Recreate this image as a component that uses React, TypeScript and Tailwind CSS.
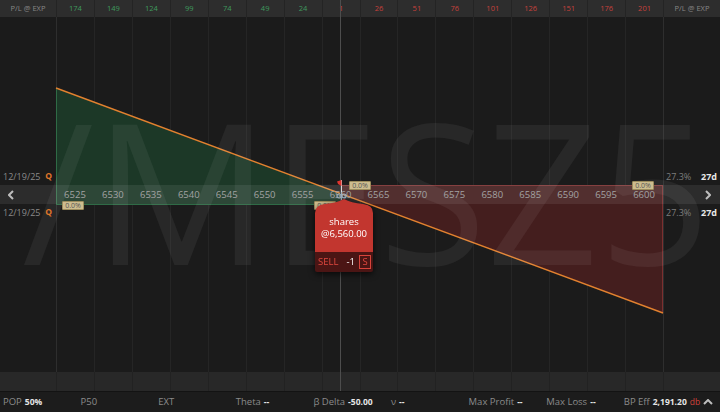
import React from 'react';

const COL = 607 / 16;
const cols = Array.from({ length: 16 }, (_, i) => i);
const plAtExp = [174, 149, 124, 99, 74, 49, 24, 1, 26, 51, 76, 101, 126, 151, 176, 201];
const prices = cols.map((i) => 6525 + i * 5);

// P/L line in chart coordinates (chart area starts at y=17)
const LX0 = 56;
const LY0 = 71;
const LX1 = 663;
const LY1 = 296;
const ZX = 340;
const ZY = LY0 + ((ZX - LX0) * (LY1 - LY0)) / (LX1 - LX0);

function ChartCanvas() {
  return (
    <svg className="absolute inset-0" width={720} height={355} viewBox="0 0 720 355">
      {Array.from({ length: 17 }, (_, i) => {
        const x = Math.round(56 + COL * i) + 0.5;
        const edge = i === 0 || i === 16;
        return <line key={i} x1={x} x2={x} y1={0} y2={355} stroke={edge ? '#2e2e2e' : '#252525'} strokeWidth={1} />;
      })}
      {/* profit zone */}
      <polygon points={`${LX0},${LY0} ${ZX},${ZY} ${ZX},187 ${LX0},187`} fill="#1c3827" />
      <line x1={LX0} x2={ZX} y1={187.5} y2={187.5} stroke="#2f6b46" strokeWidth={1} />
      <line x1={LX0 + 0.5} x2={LX0 + 0.5} y1={LY0} y2={187} stroke="#2f6b46" strokeWidth={1} />
      {/* loss zone */}
      <polygon points={`${ZX},168 ${LX1},168 ${LX1},${LY1} ${ZX},${ZY}`} fill="#441e1e" />
      <line x1={ZX} x2={LX1} y1={168.5} y2={168.5} stroke="#7c3030" strokeWidth={1} />
      <line x1={LX1 - 0.5} x2={LX1 - 0.5} y1={168} y2={LY1} stroke="#7c3030" strokeWidth={1} />
      {/* P/L line */}
      <line x1={LX0} y1={LY0} x2={LX1} y2={LY1} stroke="#e2812f" strokeWidth={1.4} />
    </svg>
  );
}

function Badge({ className }: { className: string }) {
  return (
    <div
      className={`absolute flex h-[9px] w-[22px] items-center justify-center rounded-[1px] border border-[#9c8c5c] bg-[#cdbd8f] text-[7px] leading-none text-[#555] ${className}`}
    >
      0.0%
    </div>
  );
}

function OrderBubble() {
  return (
    <div className="absolute left-[315px] top-[199px] flex w-[58px] flex-col drop-shadow-[0_2px_3px_rgba(0,0,0,0.7)]">
      <svg width={58} height={14} viewBox="0 0 58 14" className="block">
        <path d="M0,14 Q0,6 10,5 Q22,4 29,0 Q36,4 48,5 Q58,6 58,14 Z" fill="#c2362f" />
      </svg>
      <div className="flex h-[39px] flex-col items-center bg-[#c2362f] pt-[3px] text-[9.5px] leading-[12px] text-white">
        <span>shares</span>
        <span>@6,560.00</span>
      </div>
      <div className="flex h-[20px] items-center rounded-b-[2px] bg-[#4b1514] pl-[3px] pr-[2px] text-[9.5px]">
        <span className="text-[#e0483f]">SELL</span>
        <span className="ml-auto mr-[4px] text-white">-1</span>
        <span className="flex h-[14px] w-[12px] items-center justify-center border border-[#d8433b] text-[#e0483f]">S</span>
      </div>
    </div>
  );
}

function Chevron({ dir }: { dir: 'left' | 'right' | 'up' }) {
  const pts = dir === 'left' ? '5,1 1,5 5,9' : dir === 'right' ? '1,1 5,5 1,9' : '1,5 5,1 9,5';
  const w = dir === 'up' ? 10 : 6;
  const h = dir === 'up' ? 6 : 10;
  return (
    <svg width={w} height={h} viewBox={`0 0 ${w} ${h}`}>
      <polyline points={pts} fill="none" stroke="#bdbdbd" strokeWidth={2} />
    </svg>
  );
}

function DateRow() {
  return (
    <div className="flex h-[17px] items-center text-[9px]">
      <div className="flex w-[56px] items-center pl-[3px] text-[#8a8a8a]">
        <span>12/19/25</span>
        <span className="ml-auto mr-[4px] text-[8.5px] font-bold text-[#e0772a]">Q</span>
      </div>
      <div className="w-[607px]" />
      <div className="flex w-[57px] items-center justify-between pl-[3px] pr-[3px]">
        <span className="text-[#7d7d7d]">27.3%</span>
        <span className="font-bold text-[#e8e8e8]">27d</span>
      </div>
    </div>
  );
}

function Stat({ label, value, extra }: { label: string; value: string; extra?: string }) {
  return (
    <div className="flex w-[77.6px] shrink-0 items-center gap-[3px] whitespace-nowrap">
      <span className="text-[9.5px] text-[#8b8b8b]">{label}</span>
      {value && <span className="text-[8.5px] font-bold text-[#e6e6e6]">{value}</span>}
      {extra && <span className="text-[8.5px] text-[#d2423b]">{extra}</span>}
    </div>
  );
}

export default function App() {
  return (
    <div className="relative flex h-[412px] w-[720px] flex-col overflow-hidden bg-[#1b1b1b] font-['Open_Sans',sans-serif]">
      {/* header */}
      <div className="flex h-[17px] bg-[#2d2d2d] text-[7.5px] leading-none">
        <div className="flex w-[56px] items-center justify-center text-[#878787]">P/L @ EXP</div>
        <div className="flex w-[607px]">
          {cols.map((i) => (
            <div
              key={i}
              className={`flex flex-1 items-center justify-center border-l border-[#242424] ${i < 7 ? 'text-[#3f9a5d]' : 'text-[#c8413c]'}`}
            >
              {plAtExp[i]}
            </div>
          ))}
        </div>
        <div className="flex w-[57px] items-center justify-center border-l border-[#242424] text-[#878787]">P/L @ EXP</div>
      </div>

      {/* chart */}
      <div className="relative h-[355px]">
        <ChartCanvas />
        <div className="pointer-events-none absolute left-[22px] top-[74px] whitespace-nowrap text-[196px] leading-none text-[#ffffff0f]">
          /MESZ5
        </div>
        <div className="relative flex flex-col pt-[151px]">
          <DateRow />
          <div className="flex h-[19px] items-center bg-[#ffffff14] text-[9.5px] leading-none text-[#a3a3a3]">
            <div className="flex w-[56px] items-center pl-[8px]">
              <Chevron dir="left" />
            </div>
            <div className="flex w-[607px]">
              {prices.map((p) => (
                <div key={p} className="flex flex-1 justify-center">
                  {p}
                </div>
              ))}
            </div>
            <div className="flex w-[57px] items-center justify-end pr-[9px]">
              <Chevron dir="right" />
            </div>
          </div>
          <DateRow />
        </div>
      </div>

      {/* lower band */}
      <div className="flex h-[19px] bg-[#282828]">
        <div className="w-[56px]" />
        <div className="flex w-[607px]">
          {cols.map((i) => (
            <div key={i} className="flex-1 border-l border-[#222]" />
          ))}
        </div>
        <div className="w-[57px] border-l border-[#222]" />
      </div>

      {/* status bar */}
      <div className="flex h-[21px] items-center border-t border-[#131313] bg-[#1c1c1c] pl-[3px]">
        <Stat label="POP" value="50%" />
        <Stat label="P50" value="" />
        <Stat label="EXT" value="" />
        <Stat label="Theta" value="--" />
        <Stat label="β Delta" value="-50.00" />
        <Stat label="ν" value="--" />
        <Stat label="Max Profit" value="--" />
        <Stat label="Max Loss" value="--" />
        <Stat label="BP Eff" value="2,191.20" extra="db" />
        <div className="ml-auto mr-[7px] flex items-center">
          <Chevron dir="up" />
        </div>
      </div>

      {/* center marker line */}
      <div className="pointer-events-none absolute left-[340px] top-0 h-[391px] w-px bg-[#4d4d4d]" />

      {/* overlays */}
      <Badge className="left-[62px] top-[201px]" />
      <Badge className="left-[314px] top-[201px]" />
      <Badge className="left-[349px] top-[181px]" />
      <Badge className="left-[632px] top-[181px]" />

      <svg className="absolute left-[334px] top-[179px]" width={14} height={24} viewBox="0 0 14 24">
        <line x1={7.5} x2={7.5} y1={1} y2={14} stroke="#d9d9d9" strokeWidth={1} />
        <polygon points="7.5,1 3,2.5 4,5 7.5,7" fill="#e0342e" />
        <circle cx={5} cy={17} r={2} fill="none" stroke="#9fb0bf" strokeWidth={1.2} />
        <circle cx={10} cy={17} r={2} fill="none" stroke="#9fb0bf" strokeWidth={1.2} />
        <line x1={7.5} x2={7.5} y1={13} y2={21} stroke="#9fb0bf" strokeWidth={1.2} />
      </svg>

      <OrderBubble />
    </div>
  );
}
